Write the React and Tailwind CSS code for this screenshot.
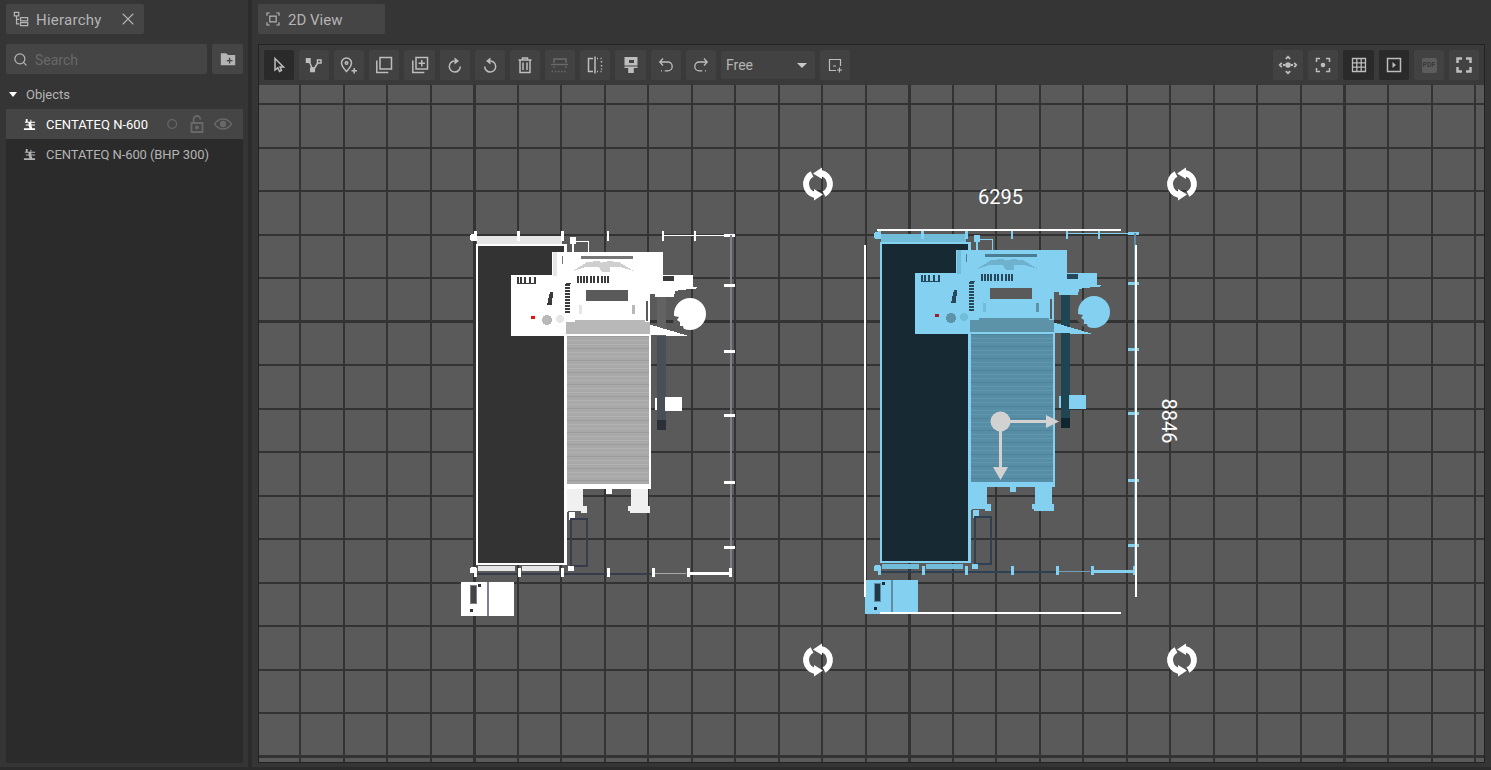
import React from 'react'
import { X, Search } from 'lucide-react'

const Ic = ({ children, className = '', size = 20 }) => (
  <svg viewBox="0 0 20 20" width={size} height={size} fill="none" stroke="currentColor" strokeWidth="1.5" className={className}>
    {children}
  </svg>
)

const icons = {
  cursor: <path d="M6 3.5V15l2.8-2.2 1.7 3.7 2-1-1.5-3.5h3.5z" />,
  poly: (
    <>
      <path d="M5 6l3.5 8M10 14l4-6.5" />
      <rect x="2.5" y="3.8" width="3.5" height="3.5" fill="currentColor" />
      <rect x="13.5" y="5" width="3.5" height="3" />
      <rect x="6.8" y="13" width="3.5" height="3.5" fill="currentColor" />
    </>
  ),
  pin: (
    <>
      <path d="M7.5 3a5 5 0 0 1 5 5c0 3.2-5 8.5-5 8.5s-5-5.3-5-8.5a5 5 0 0 1 5-5z" />
      <circle cx="7.5" cy="8" r="1.3" />
      <path d="M12.5 15.8h5.500M15.200 13v5.500" />
    </>
  ),
  copy: (
    <>
      <rect x="6" y="2.5" width="11.5" height="11.5" />
      <path d="M2.8 5.500v12h11.500" />
    </>
  ),
  queue: (
    <>
      <rect x="6" y="2.5" width="11.5" height="11.5" />
      <path d="M2.8 5.500v12h11.500M8.500 8.200h6.500M11.800 5v6.500" />
    </>
  ),
  rotR: (
    <>
      <path d="M15.300 11.500a5.500 5.500 0 1 1-5.800-5.500" />
      <path d="M9.500 2.500l4.500 3.500-4.500 3.500z" fill="currentColor" stroke="none" />
    </>
  ),
  rotL: (
    <>
      <path d="M4.700 11.500a5.500 5.500 0 1 0 5.800-5.500" />
      <path d="M10.500 2.500L6 6l4.500 3.500z" fill="currentColor" stroke="none" />
    </>
  ),
  trash: <path d="M3.500 5h13M7.500 5V3h5v2M5 5v12.500h10V5M8 7.500v7.500M12 7.500v7.500" />,
  align: (
    <path d="M4 8V4h12v4M1 9.500h17M4 11.500v1.500M1.500 16.500h1.500M5 16.500h1.500M8 16.500h1.500M11 16.500h1.500M14 16.500h1.500M16 11.500v1.500" />
  ),
  flip: (
    <path d="M8 3.500H3.500v13H8M12 3.500h1M15.500 3.500h1M12 16.500h1M15.500 16.500h1M16.500 6v1.500M16.500 10v1.500M16.500 13.500v1M10 1.500v17" />
  ),
  paint: (
    <path
      d="M3.500 2h13v11h-3.700v5H7.200v-5H3.500zM8 5v3h5V5zM3.500 10.500v1h13v-1z"
      fill="currentColor"
      fillRule="evenodd"
      stroke="none"
    />
  ),
  undo: <path d="M7 3.500L3.800 7 7 10.500M3.800 7h8a4.300 4.300 0 0 1 0 8.800h-3M5 15.800h1" strokeWidth="1.300" />,
  redo: <path d="M13 3.500L16.200 7 13 10.500M16.200 7h-8a4.300 4.300 0 0 0 0 8.800h3M14 15.800h1" strokeWidth="1.300" />,
  frameAdd: <path d="M11 15.500H4.500v-11h11V11M8 11h3M12 15h5M14.500 12.500v5" strokeWidth="1.200" />,
  move: (
    <>
      <circle cx="10" cy="10" r="2.800" fill="currentColor" stroke="none" />
      <path d="M7.800 3.800L10 1.800l2.200 2M7.800 16.200L10 18.200l2.200-2M3.800 7.800L1.800 10l2 2.200M16.200 7.800L18.200 10l-2 2.200" strokeWidth="1.800" />
      <path d="M5 9h2v2H5zM13 9h2v2h-2z" fill="currentColor" stroke="none" />
    </>
  ),
  focus: (
    <>
      <circle cx="10" cy="10" r="2.300" fill="currentColor" stroke="none" />
      <path d="M3.500 7V3.500H7M13 3.500h3.500V7M3.500 13v3.500H7M13 16.500h3.500V13" />
    </>
  ),
  grid: <path d="M3.500 3.500h13v13h-13zM3.500 7.800h13M3.500 12.200h13M7.800 3.500v13M12.200 3.500v13" strokeWidth="1.300" />,
  play: (
    <>
      <rect x="3.500" y="3.500" width="13" height="13" />
      <path d="M8.500 7l3.500 3-3.500 3z" fill="currentColor" stroke="none" />
    </>
  ),
  full: <path d="M3.500 8V3.500H8M12 3.500h4.500V8M3.500 12v4.500H8M12 16.500h4.500V12" strokeWidth="2.500" />,
}

const Tool = ({ icon, active, off, wide }) => (
  <div
    className={`${wide ? 'w-[31px]' : 'w-[30px]'} h-[30px] flex items-center justify-center rounded-[2px] ${
      active ? 'bg-[#2a2a2a]' : 'bg-[#424242]'
    } ${off ? 'text-[#696969]' : 'text-[#bdbdbd]'}`}
  >
    <Ic>{icons[icon]}</Ic>
  </div>
)

// drawing of the machine, used twice: plain (white) and selected (blue)
function Machine({ c, x = 0, y = 0 }) {
  const stripes = Array.from({ length: 38 }, (_, i) => 336 + i * 4)
  const bottomTicks = [475, 519, 562, 608, 653, 688, 730]
  const sideTicks = [285, 351, 415, 482, 547]
  const topTicks = [
    [474, 3],
    [517, 3],
    [561, 3],
    [607, 2],
    [662, 2],
    [694, 2],
  ]
  return (
    <g transform={`translate(${x} ${y})`} shapeRendering="crispEdges">
      {/* top rail */}
      <rect x="477" y="236" width="85" height="9" fill={c.light} />
      <rect x="662" y="234.500" width="64" height="1.500" fill={c.fill} />
      <rect x="724" y="234" width="11" height="3" fill={c.fill} />
      {topTicks.map(([tx, w]) => (
        <rect key={tx} x={tx} y="231" width={w} height="10" fill={c.fill} />
      ))}
      <rect x="470" y="234" width="7" height="7" rx="3" fill={c.fill} />

      {/* side rail */}
      <rect x="729.500" y="235" width="2" height="338" fill={c.rail} />
      {sideTicks.map((ty) => (
        <rect key={ty} x="724" y={ty - 1} width="11" height="3" fill={c.fill} />
      ))}

      {/* table */}
      <rect x="477" y="245" width="88.500" height="319" fill={c.dark} stroke={c.fill} strokeWidth="2.500" />

      {/* side column */}
      <rect x="657" y="297" width="9" height="39" fill={c.columnTop} />
      <rect x="657" y="336" width="9" height="94" fill={c.column} />
      <rect x="657" y="420" width="9" height="10" fill={c.columnEnd} />
      <rect x="655" y="398" width="2" height="12" fill={c.fill} />
      <rect x="665" y="397" width="17" height="14" fill={c.fill} />

      {/* conveyor */}
      <rect x="566" y="333" width="84" height="153" fill={c.belt} />
      {stripes.map((sy, i) => (
        <rect key={sy} x="567" y={sy} width="82" height="1" fill={i % 3 === 0 ? c.beltDark : c.beltLight} />
      ))}
      <rect x="565" y="333" width="2" height="155" fill={c.fill} />
      <rect x="649" y="333" width="2" height="155" fill={c.fill} />
      <rect x="565" y="484" width="86" height="5" fill={c.fill} />
      <rect x="606" y="489" width="6" height="5" fill={c.fill} />

      {/* feet */}
      <path d="M567 489h16v17h4v7h-6v-2h-12l-2 1z" fill={c.foot} />
      <path d="M631 489h17v17h2v7h-20v-2h-2v-5h3z" fill={c.foot} />
      <rect x="569" y="512" width="6" height="8" fill={c.fill} />
      <rect x="571" y="519" width="16" height="47" fill="none" stroke={c.outline} strokeWidth="1.500" />

      {/* main body */}
      <rect x="552" y="252" width="111" height="24" fill={c.fill} />
      <rect x="511" y="275" width="139" height="61" fill={c.fill} />
      <path d="M650 275h43v12l8 1-20 2-6 1-1 6h-19v-3l-5 0z" fill={c.fill} />
      <path d="M596 334l54-9 5 1 34 10z" fill={c.fill} />
      <rect x="566" y="322" width="84" height="12" fill={c.bodyGrey} />
      <rect x="575" y="320" width="70" height="4" fill={c.bodyGrey} />
      <rect x="586" y="290" width="42" height="11" fill={c.hole} />
      <rect x="663" y="276" width="11" height="5" fill={c.hole2} />
      <rect x="646" y="301" width="2" height="20" fill={c.hole} />

      {/* head detail */}
      <rect x="581" y="256" width="52" height="3" fill={c.headDark} />
      <path d="M573 271l14-9 12-1 4 4 4-4 12 1 15 9-14-4-14 0-2 4-3 0-2-4-14 0z" fill={c.headMid} />
      <rect x="602" y="262" width="8" height="10" fill={c.headMid} />
      <rect x="562" y="256" width="1" height="8" fill={c.headDark} />
      <rect x="553" y="252" width="4" height="24" fill={c.light} />

      {/* slots on body */}
      {[577, 580, 583, 586, 590, 593, 597, 601, 604, 607].map((sx) => (
        <rect key={sx} x={sx} y="276" width="1.500" height="7" fill={c.hole2} />
      ))}
      {[517, 520, 524, 529, 534].map((sx) => (
        <rect key={sx} x={sx} y="277" width="2" height="7" fill={c.hole2} />
      ))}
      <rect x="517" y="283" width="19" height="1" fill={c.hole2} />
      <rect x="566" y="283" width="5" height="1" fill={c.hole2} />
      {[284, 287, 290, 293, 296, 299, 302, 305, 308, 311].map((sy) => (
        <rect key={sy} x="565" y={sy} width="5" height="2" fill={c.hole2} />
      ))}
      <path d="M550 292h3l-1 13h-5z" fill={c.hole2} />
      <rect x="531" y="316" width="4" height="3" fill={c.red} />
      <circle cx="547" cy="320" r="5" fill={c.bodyGrey} />
      <circle cx="560" cy="319" r="4" fill={c.light} />
      <rect x="632" y="305" width="3" height="9" fill={c.bodyGrey} />
      <rect x="579" y="305" width="3" height="9" fill={c.light} />

      {/* spindle + pipe */}
      <rect x="570" y="237" width="6" height="7" fill={c.fill} />
      <path d="M576 241.500h12.500V252" stroke={c.fill} strokeWidth="1.500" fill="none" />
      <path d="M573 244v8" stroke={c.fill} strokeWidth="1.500" fill="none" />
      <g shapeRendering="auto">
        <circle cx="690" cy="314" r="16" fill={c.fill} />
        <path d="M674 316l5 1-2 3 3 2 0 4 3 0 1 4-6-2-5-6z" fill={c.hole} />
      </g>

      {/* bottom rail */}
      <rect x="478" y="566" width="37" height="5" fill={c.light} />
      <rect x="522" y="566" width="37" height="5" fill={c.light} />
      <rect x="568" y="566" width="6" height="5" fill={c.fill} />
      <rect x="476" y="573" width="176" height="1.500" fill={c.outline} />
      <rect x="652" y="572.500" width="34" height="1.500" fill={c.rail2} />
      <rect x="688" y="571.500" width="43" height="3" fill={c.fill} />
      {bottomTicks.map((tx) => (
        <rect key={tx} x={tx - 1} y="568" width="3" height="9" fill={c.fill} />
      ))}
      <rect x="470" y="567" width="6" height="6" rx="2" fill={c.fill} />

      {/* small cabinet */}
      <rect x="461" y="582" width="26" height="34" fill={c.fill} />
      <rect x="489" y="582" width="25" height="34" fill={c.fill} />
      <rect x="487" y="582" width="2" height="34" fill={c.rail} />
      <rect x="470" y="585" width="6" height="18" fill={c.cabinet} stroke={c.rail} strokeWidth="1" />
      <rect x="478" y="584" width="3" height="3" fill={c.dark} />
      <rect x="470" y="609" width="3" height="3" fill={c.dark} />
    </g>
  )
}

const plain = {
  fill: '#ffffff',
  light: '#e6e6e6',
  foot: '#f0f0f0',
  dark: '#333333',
  rail: '#7d808c',
  rail2: '#a8a8a8',
  columnTop: '#626262',
  column: '#4a4e57',
  columnEnd: '#2c3038',
  belt: '#a9a9a9',
  beltDark: '#9c9c9c',
  beltLight: '#b2b2b2',
  outline: '#363c4a',
  bodyGrey: '#b8b8b8',
  hole: '#5a5a5a',
  hole2: '#3a3a3a',
  headDark: '#777777',
  headMid: '#cfcfcf',
  cabinet: '#444444',
  red: '#f01010',
}

const blue = {
  fill: '#84d0f0',
  light: '#70bcd9',
  foot: '#84d0f0',
  dark: '#172a33',
  rail: '#5f8ba3',
  rail2: '#6f9db5',
  columnTop: '#1f4552',
  column: '#1f4552',
  columnEnd: '#10262e',
  belt: '#578ea5',
  beltDark: '#4e8399',
  beltLight: '#5f97ad',
  outline: '#2e4154',
  bodyGrey: '#5c93a8',
  hole: '#5a5a5a',
  hole2: '#26485a',
  headDark: '#4a7d92',
  headMid: '#6eb2cd',
  cabinet: '#1f3a47',
  red: '#a01c2c',
}

const Spin = ({ x, y }) => {
  const half = (
    <>
      <path d="M3 -11A11.300 11.300 0 0 1 6 10" stroke="#fff" strokeWidth="6" fill="none" />
      <path d="M-5 -10.500L4 -16.500V-5z" fill="#fff" />
    </>
  )
  return (
    <g transform={`translate(${x} ${y})`}>
      {half}
      <g transform="rotate(180)">{half}</g>
    </g>
  )
}

export default function App() {
  const vLines = Array.from({ length: 28 }, (_, i) => 300 + i * 43.52)
  const hLines = Array.from({ length: 16 }, (_, i) => 104 + i * 43.53)

  return (
    <div className="w-[1491px] h-[770px] overflow-hidden bg-[#353535] flex flex-col text-[#b4b4b4] font-['Roboto',sans-serif]">
      <div className="flex h-[767px]">
        {/* left side */}
        <div className="w-[248px] pl-[6px] pr-[5px] pt-[4px] shrink-0 flex flex-col">
          <div className="w-[138px] h-[30px] bg-[#454545] rounded-[2px] flex items-center pl-[7px] pr-[6px]">
            <svg viewBox="0 0 18 18" width="16" height="16" fill="none" stroke="currentColor" strokeWidth="1.400">
              <path d="M1.500 1.500h5v4h-5zM4 5.500v9h3M4 9.500h3M8.500 7.500h8v3.500h-8zM8.500 13h8v3.500h-8z" />
            </svg>
            <span className="text-[15px] ml-[7px] pt-[2px] tracking-[0.25px]">Hierarchy</span>
            <X className="w-[20px] h-[20px] ml-auto" strokeWidth={1.3} />
          </div>

          <div className="flex gap-[5px] mt-[10px] h-[30px]">
            <div className="w-[201px] bg-[#454545] rounded-[2px] flex items-center pl-[7px]">
              <Search className="w-[15px] h-[15px] text-[#b4b4b4]" strokeWidth={2} />
              <span className="text-[14px] ml-[7px] pt-[2px] text-[#686868]">Search</span>
            </div>
            <div className="w-[31px] bg-[#454545] rounded-[2px] flex items-center justify-center">
              <svg viewBox="0 0 20 20" width="18" height="18">
                <path
                  d="M2 3.500h6l2 2h8v11.500H2zM11 8.500v2.500H8.500v1.500H11V15h1.500v-2.500H15V11h-2.500V8.500z"
                  fill="currentColor"
                  fillRule="evenodd"
                />
              </svg>
            </div>
          </div>

          <div className="mt-[6px] h-[683px] bg-[#2b2b2b] text-[13px]">
            <div className="h-[29px] bg-[#353535] flex items-center pl-[3px]">
              <div className="w-0 h-0 border-l-[4px] border-r-[4px] border-t-[5px] border-l-transparent border-r-transparent border-t-white" />
              <span className="ml-[9px]">Objects</span>
            </div>
            <div className="h-[30px] bg-[#454545] flex items-center pl-[18px] text-white">
              <MachineIcon />
              <span className="ml-[10px] pt-[2px]">CENTATEQ N-600</span>
              <div className="ml-auto flex items-center pr-[10px] text-[#686868] gap-[6px]">
                <svg viewBox="0 0 20 20" width="16" height="16" fill="none" stroke="currentColor" strokeWidth="1.500" className="-ml-[1px]">
                  <circle cx="9" cy="10" r="5.500" />
                </svg>
                <svg viewBox="0 0 20 20" width="20" height="20" fill="none" stroke="currentColor" strokeWidth="1.800">
                  <path d="M4.500 9h11v9h-11zM6.500 9V5.500a3.500 3.500 0 0 1 7 0" />
                  <circle cx="10" cy="13.500" r="1.200" fill="currentColor" />
                </svg>
                <svg viewBox="0 0 20 20" width="20" height="20" fill="none" stroke="currentColor" strokeWidth="1.400">
                  <path d="M1.500 10c2.500-3.500 5.500-5 8.500-5s6 1.500 8.500 5c-2.500 3.500-5.500 5-8.500 5s-6-1.500-8.500-5z" />
                  <circle cx="10" cy="10" r="2.500" fill="currentColor" />
                </svg>
              </div>
            </div>
            <div className="h-[30px] flex items-center pl-[18px]">
              <MachineIcon />
              <span className="ml-[10px] pt-[2px] tracking-[-0.08px]">CENTATEQ N-600 (BHP 300)</span>
            </div>
          </div>
        </div>

        {/* gutter */}
        <div className="w-[4px] bg-[#2b2b2b] shrink-0" />

        {/* right side */}
        <div className="flex-1 pl-[6px] pr-[6px] pt-[4px] flex flex-col min-w-0">
          <div className="w-[127px] h-[30px] bg-[#454545] rounded-[2px] flex items-center pl-[7px]">
            <Ic size={16}>
              <path d="M2.500 6V2.500H6M14 2.500h3.500V6M2.500 14v3.500H6M14 17.500h3.500V14M6 6.500h8v7H6z" />
            </Ic>
            <span className="text-[15px] ml-[7px] pt-[2px]">2D View</span>
          </div>

          <div className="mt-[10px] h-[719px] border border-[#222222] flex flex-col">
            {/* toolbar */}
            <div className="h-[40px] bg-[#3a3a3a] shrink-0 flex items-center pl-[5px] pr-[5px] gap-[5px]">
              <Tool icon="cursor" active />
              <Tool icon="poly" />
              <Tool icon="pin" />
              <Tool icon="copy" />
              <Tool icon="queue" wide />
              <Tool icon="rotR" />
              <Tool icon="rotL" />
              <Tool icon="trash" />
              <Tool icon="align" off />
              <Tool icon="flip" />
              <Tool icon="paint" wide />
              <Tool icon="undo" />
              <Tool icon="redo" />
              <div className="w-[94px] h-[28px] bg-[#424242] rounded-[2px] flex items-center justify-between pl-[5px] pr-[8px] text-[14px]">
                <span className="pt-[1px]">Free</span>
                <div className="w-0 h-0 border-l-[5px] border-r-[5px] border-t-[5px] border-l-transparent border-r-transparent border-t-[#c8c8c8]" />
              </div>
              <Tool icon="frameAdd" />

              <div className="ml-auto flex gap-[5px]">
                <Tool icon="move" />
                <Tool icon="focus" />
                <Tool icon="grid" active wide />
                <Tool icon="play" active />
                <div className="w-[30px] h-[30px] bg-[#424242] rounded-[2px] flex items-center justify-center">
                  <div className="w-[15px] h-[15px] bg-[#5c5c5c] rounded-[2px] flex items-center justify-center text-[7px] leading-none font-bold text-[#3a3a3a]">
                    PDF
                  </div>
                </div>
                <Tool icon="full" />
              </div>
            </div>

            {/* canvas */}
            <div className="relative flex-1 bg-[#5a5a5a] overflow-hidden">
              <svg viewBox="259 85 1225 678" width="1225" height="678" className="absolute inset-0">
                <g shapeRendering="crispEdges" stroke="#333333">
                  {vLines.map((lx, i) => (
                    <line key={lx} x1={lx} x2={lx} y1="85" y2="763" strokeWidth={(i - 4) % 10 === 0 ? 3 : 2} />
                  ))}
                  {hLines.map((ly, i) => (
                    <line key={ly} x1="259" x2="1484" y1={ly} y2={ly} strokeWidth={(i - 5) % 10 === 0 ? 3 : 2} />
                  ))}
                </g>

                <Machine c={plain} />
                <Machine c={blue} x={404} y={-2} />

                {/* selection frame */}
                <g fill="#fff" shapeRendering="crispEdges">
                  <rect x="877" y="229" width="244" height="2" />
                  <rect x="880" y="612" width="241" height="2" />
                  <rect x="864" y="245" width="2" height="352" />
                  <rect x="1135" y="245" width="2" height="352" />
                </g>

                {/* move gizmo */}
                <g fill="#d2d2d2">
                  <circle cx="1000.500" cy="421.500" r="10" />
                  <rect x="1005" y="420" width="42" height="3" />
                  <path d="M1046 415l13 6.500-13 6.500z" />
                  <rect x="999" y="425" width="3" height="43" />
                  <path d="M993 467h15l-7.500 13z" />
                </g>

                <Spin x={818} y={184} />
                <Spin x={1182} y={184} />
                <Spin x={818} y={660} />
                <Spin x={1182} y={660} />
              </svg>

              <span className="absolute left-[719px] top-[100px] text-[20px] leading-[24px] text-white">6295</span>
              <span className="absolute left-[888px] top-[324px] text-[20px] leading-[24px] text-white rotate-90">8846</span>
            </div>
          </div>
        </div>
      </div>
      <div className="h-[3px] bg-[#2b2b2b]" />
    </div>
  )
}

function MachineIcon() {
  return (
    <svg viewBox="0 0 14 14" width="13" height="13" className="shrink-0 -ml-[1px]">
      <path
        d="M1 11h12v2H1zM3 1h2v3h3V2h1v2h4v1H9v2h4v1H9l1 3H7L6 8H3V7h3V5H2V4h1z"
        fill="currentColor"
      />
    </svg>
  )
}
